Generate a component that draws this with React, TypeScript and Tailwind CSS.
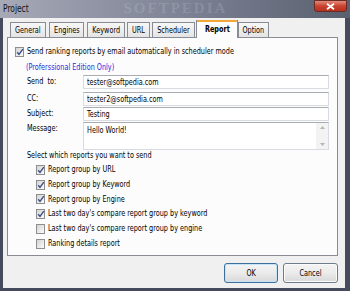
import React from "react";

const font = { fontFamily: "'DejaVu Sans Condensed', 'Liberation Sans', sans-serif" };

// the screenshot is squeezed horizontally, so text is narrowed to match
function T({ children, center }: { children: React.ReactNode; center?: boolean }) {
  return (
    <span className={`inline-block whitespace-nowrap scale-x-[0.76] ${center ? "origin-center" : "origin-left"}`}>
      {children}
    </span>
  );
}

function Box({ checked }: { checked?: boolean }) {
  return (
    <span className="relative w-[9px] h-[10px] shrink-0 border border-[#8f8f8f] bg-gradient-to-br from-[#d4d4d4] to-[#fbfbfb] flex items-center justify-center">
      {checked && (
        <svg width="8" height="8" viewBox="0 0 8 8" className="absolute left-[0px] top-[0px]">
          <path d="M1.2 4.2 L3 6.4 L6.8 1.2" fill="none" stroke="#3a4f86" strokeWidth="1.4" />
        </svg>
      )}
    </span>
  );
}

function Tab({ label, w, ml, active }: { label: string; w: string; ml: string; active?: boolean }) {
  if (active) {
    return (
      <div className={`${w} ${ml} relative z-10 -mb-px h-[18px] border border-b-0 border-[#898c95] bg-[#fcfcfc] flex items-center justify-center font-bold text-black`}>
        <span className="absolute left-0 right-0 top-[-1px] h-[2px] bg-[#f2a73b]" />
        <T center>{label}</T>
      </div>
    );
  }
  return (
    <div className={`${w} ${ml} h-[15px] border border-b-0 border-[#898c95] bg-gradient-to-b from-[#f7f7f7] to-[#e4e4e4] flex items-center justify-center text-black`}>
      <T center>{label}</T>
    </div>
  );
}

function Field({ label, value, mt }: { label: string; value: string; mt: string }) {
  return (
    <div className={`flex items-start ${mt}`}>
      <span className="w-[56px] leading-[12px]"><T>{label}</T></span>
      <div className="w-[246px] h-[14px] border border-[#d8dbe1] border-t-[#a9acb3] bg-white flex items-center pl-[3px] leading-none">
        <T>{value}</T>
      </div>
    </div>
  );
}

const reports: [string, boolean, string][] = [
  ["Report group by URL", true, "h-[15px]"],
  ["Report group by Keyword", true, "h-[15px]"],
  ["Report group by Engine", true, "h-[14px]"],
  ["Last two day's compare report group by keyword", true, "h-[15px]"],
  ["Last two day's compare report group by engine", false, "h-[15px]"],
  ["Ranking details report", false, "h-[15px]"],
];

export default function App() {
  return (
    <div style={font} className="w-[350px] h-[291px] bg-[#454b5c] flex flex-col overflow-hidden text-[9.5px] text-black">
      {/* title bar */}
      <div className="h-[18px] flex items-start justify-between bg-gradient-to-r from-[#a7a9b7] via-[#7f8496] to-[#59606f]">
        <span className="pl-[3px] pt-[3px] text-[11px] leading-[12px] text-[#111]"><T>Project</T></span>
        <span className="pt-[1px] text-[15px] leading-[14px] tracking-[2px] text-white/15 font-bold" style={{ fontFamily: "'Liberation Serif', serif" }}>
          SOFTPEDIA
        </span>
        <div className="mr-[3px] w-[33px] h-[12px] rounded-b-[3px] border border-[#6b2a22] bg-gradient-to-b from-[#e08a7a] via-[#c9412f] to-[#b8301f] flex items-center justify-center">
          <svg width="9" height="7" viewBox="0 0 9 7">
            <path d="M1 0.8 L8 6.2 M8 0.8 L1 6.2" stroke="white" strokeWidth="1.8" />
          </svg>
        </div>
      </div>

      {/* client */}
      <div className="ml-[3px] mr-[5px] mb-[3px] flex-1 bg-[#f0f0f0] flex flex-col">
        <div className="flex items-end h-[19px]">
          <Tab label="General" w="w-[36px]" ml="ml-[7px]" />
          <Tab label="Engines" w="w-[35px]" ml="ml-[3px]" />
          <Tab label="Keyword" w="w-[38px]" ml="ml-[3px]" />
          <Tab label="URL" w="w-[23px]" ml="ml-[2px]" />
          <Tab label="Scheduler" w="w-[43px]" ml="ml-[2px]" />
          <Tab label="Report" w="w-[42px]" ml="ml-[1px]" active />
          <Tab label="Option" w="w-[31px]" ml="ml-[0px]" />
        </div>

        <div className="ml-[4px] w-[331px] h-[219px] border border-[#898c95] bg-[#fcfcfc] flex flex-col pl-[7px] pt-[8px]">
          <div className="flex items-center gap-[3px] h-[11px]">
            <Box checked />
            <T>Send ranking reports by email automatically in scheduler mode</T>
          </div>
          <div className="pl-[11px] mt-[4px] h-[12px] flex items-center text-[#2929e0]">
            <T>(Proferssional Edition Only)</T>
          </div>

          <div className="pl-[12px] flex flex-col">
            <Field label={"Send\u00a0 to:"} value="tester@softpedia.com" mt="mt-[2px]" />
            <Field label="CC:" value="tester2@softpedia.com" mt="mt-[3px]" />
            <Field label="Subject:" value="Testing" mt="mt-[1px]" />
            <div className="flex items-start mt-[1px]">
              <span className="w-[56px] leading-[12px]"><T>Message:</T></span>
              <div className="w-[246px] h-[28px] border border-[#d8dbe1] border-t-[#a9acb3] bg-white flex">
                <span className="flex-1 pl-[3px] pt-[2px] leading-none"><T>Hello World!</T></span>
                <div className="w-[12px] bg-[#f3f3f3] flex flex-col items-center justify-between py-[3px]">
                  <svg width="5" height="3" viewBox="0 0 5 3"><path d="M0 3 L2.5 0 L5 3 Z" fill="#b5b5b5" /></svg>
                  <svg width="5" height="3" viewBox="0 0 5 3"><path d="M0 0 L2.5 3 L5 0 Z" fill="#b5b5b5" /></svg>
                </div>
              </div>
            </div>
            <div className="h-[10px] flex items-center"><T>Select which reports you want to send</T></div>
          </div>

          <div className="pl-[21px] mt-[2px] flex flex-col">
            {reports.map(([label, on, h]) => (
              <div key={label} className={`${h} flex items-center gap-[3px]`}>
                <Box checked={on} />
                <T>{label}</T>
              </div>
            ))}
          </div>
        </div>

        <div className="mt-[7px] flex justify-end gap-[5px] pr-[7px]">
          <button className="w-[54px] h-[20px] rounded-[3px] border border-[#3d6f9c] bg-gradient-to-b from-[#f4f4f4] via-[#ebebeb] to-[#d8d8d8] shadow-[inset_0_0_0_1px_#c6e4f7] flex items-center justify-center">
            <T center>OK</T>
          </button>
          <button className="w-[55px] h-[20px] rounded-[3px] border border-[#6e7b8b] bg-gradient-to-b from-[#f4f4f4] via-[#ebebeb] to-[#d8d8d8] shadow-[inset_0_0_0_1px_#fbfbfb] flex items-center justify-center">
            <T center>Cancel</T>
          </button>
        </div>
      </div>
    </div>
  );
}
